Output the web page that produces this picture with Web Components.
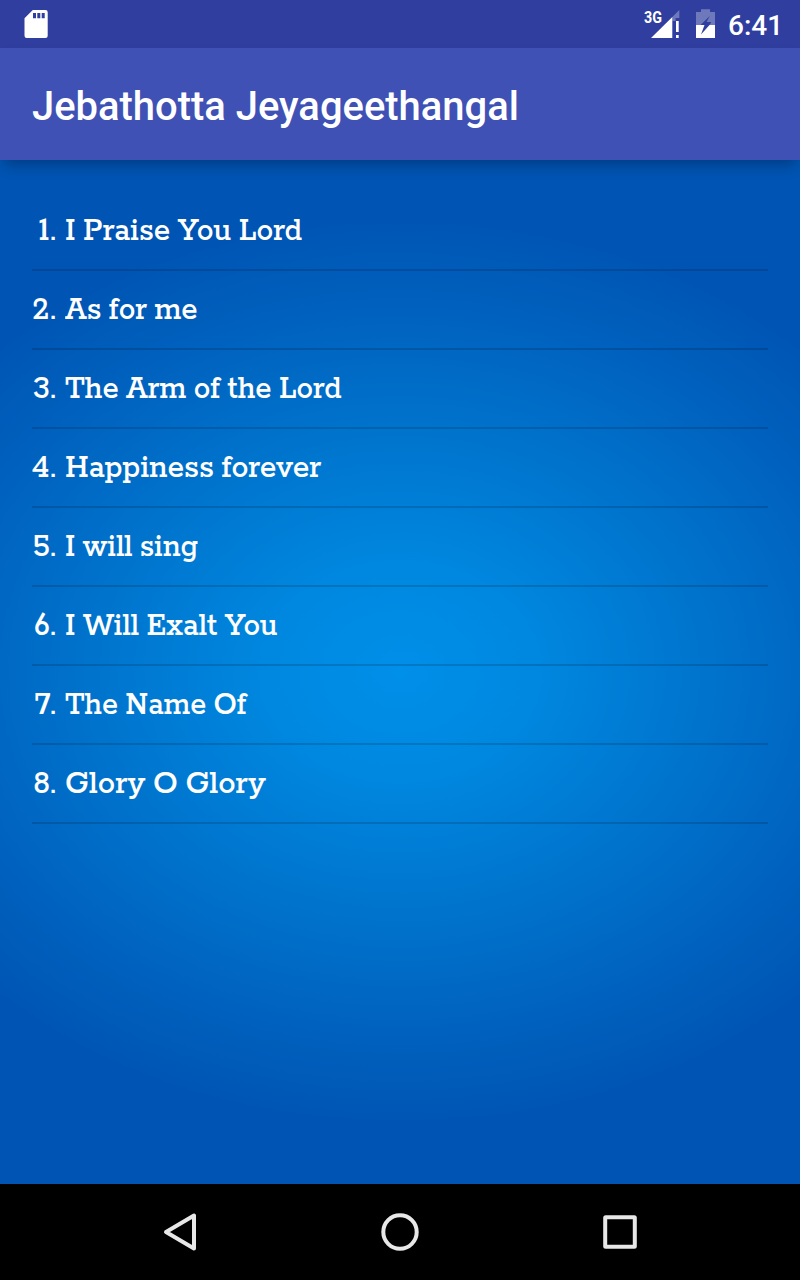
<!DOCTYPE html>
<html lang="en">
<head>
<meta charset="utf-8">
<title>Jebathotta Jeyageethangal</title>
<style>
html,body{margin:0;height:100%;overflow:hidden}
body{font-family:Roboto,"Liberation Sans",sans-serif;color:#fff}
</style>
</head>
<body>
<app-screen>
  <status-bar slot="status" time="6:41"></status-bar>
  <app-toolbar slot="toolbar">Jebathotta Jeyageethangal</app-toolbar>
  <song-list>
    <song-row number="1." extent="237">I Praise You Lord</song-row>
    <song-row number="2." extent="133">As for me</song-row>
    <song-row number="3." extent="277">The Arm of the Lord</song-row>
    <song-row number="4." extent="256">Happiness forever</song-row>
    <song-row number="5." extent="133">I will sing</song-row>
    <song-row number="6." extent="213">I Will Exalt You</song-row>
    <song-row number="7." extent="182">The Name Of</song-row>
    <song-row number="8." extent="201">Glory O Glory</song-row>
  </song-list>
  <nav-bar slot="nav"></nav-bar>
</app-screen>
<script>
function define(name, html, setup) {
  const template = document.createElement('template');
  template.innerHTML = html;
  customElements.define(name, class extends HTMLElement {
    connectedCallback() {
      if (this.shadowRoot) return;
      this.attachShadow({mode: 'open'}).append(template.content.cloneNode(true));
      if (setup) setup(this, this.shadowRoot);
    }
  });
}

define('app-screen', `<style>
:host{display:flex;flex-direction:column;width:800px;height:1280px}
main{flex:1;min-height:0;background:radial-gradient(ellipse 585px 460px at 400px 512px,#008fe9 0%,#0088e0 22%,#0074cd 52%,#005fbc 82%,#0054b3 100%)}
</style>
<slot name="status"></slot><slot name="toolbar"></slot><main><slot></slot></main><slot name="nav"></slot>`);

define('status-bar', `<style>
:host{display:flex;align-items:center;height:48px;box-sizing:border-box;padding:0 18px 0 24px;background:#303f9f}
svg{display:block;flex:none}
.space{flex:1}
.signal{margin-right:15px}
.battery{margin-right:13px}
time{width:54px;font-size:28px;font-weight:500;padding-top:4px;height:44px;line-height:44px;white-space:nowrap}
</style>
<svg width="24" height="48" viewBox="0 0 24 48"><path fill="#fff" fill-rule="evenodd" d="M8.8 10H21.5Q23.7 10 23.7 12.2V35.8Q23.7 38 21.5 38H2.7Q.5 38 .5 35.8V18.3ZM9 13V18.3H12V13ZM13.3 13V18.3H16.3V13ZM17.7 13V18.3H20.7V13Z"/></svg>
<span class="space"></span>
<svg class="signal" width="37" height="48" viewBox="644 0 37 48"><path fill="#fff" fill-opacity=".3" d="M679.3 10V18H675.6V21H672.3V17Z"/><path fill="#fff" d="M672.3 17V38H651ZM676 21H678.7V32H676ZM676 35H678.7V38H676Z"/><text x="644" y="22.7" fill="#fff" font-size="16" font-weight="700" textLength="18" lengthAdjust="spacingAndGlyphs">3G</text></svg>
<svg class="battery" width="19" height="48" viewBox="696 0 19 48"><path fill="#fff" fill-opacity=".3" fill-rule="evenodd" d="M701 9.3H710V12H715V25H709.5L711.3 22H706.5L709.8 16L700.5 25H696V12H701Z"/><path fill="#fff" fill-rule="evenodd" d="M696 25H704.5L701 34.5L709.5 25H715V38H696Z"/></svg>
<time></time>`, (host, root) => {
  root.querySelector('time').textContent = host.getAttribute('time');
});

define('app-toolbar', `<style>
:host{display:flex;align-items:center;height:112px;box-sizing:border-box;padding:6px 32px 0;background:#3f51b5;position:relative;z-index:1;box-shadow:0 8px 14px -4px rgba(0,0,0,.3)}
h1{margin:0;font-size:39.95px;line-height:48px;font-weight:500;white-space:nowrap}
</style><h1><slot></slot></h1>`);

define('song-list', `<style>
:host{display:flex;flex-direction:column;padding:32px 32px 0}
</style><slot></slot>`);

/* The title is set in a slab face and fitted to its own extent in pixels. */
define('song-row', `<style>
:host{display:flex;align-items:center;height:79px;box-sizing:border-box;border-bottom:2px solid rgba(0,0,0,.15);font:500 29px/40px Rockwell,Rokkitt,"DejaVu Serif",serif;font-size-adjust:cap-height .73}
.number{flex:none;display:flex;justify-content:flex-end;width:25px;margin-right:7.5px;letter-spacing:1.3px;transform:scaleX(.95);transform-origin:100% 50%}
.title{display:inline-block;white-space:nowrap;word-spacing:-2.5px;transform-origin:0 50%}
</style><span class="number"></span><span class="title"><slot></slot></span>`, (host, root) => {
  root.querySelector('.number').textContent = host.getAttribute('number');
  const label = root.querySelector('.title');
  const fit = () => {
    const width = label.offsetWidth;
    if (width) label.style.transform = 'scaleX(' + host.getAttribute('extent') / width + ')';
  };
  fit();
  requestAnimationFrame(fit);
});

define('nav-bar', `<style>
:host{display:flex;justify-content:center;align-items:center;gap:172px;height:96px;background:#000}
svg{display:block;fill:none;stroke:#e8e8e8;stroke-width:4;stroke-linejoin:round}
</style>
<svg width="48" height="48" viewBox="156 1208 48 48"><path d="M194 1215.6V1248.4L166 1232Z"/></svg>
<svg width="48" height="48" viewBox="376 1208 48 48"><circle cx="400" cy="1232" r="16.7"/></svg>
<svg width="48" height="48" viewBox="596 1208 48 48"><rect x="605.2" y="1217.2" width="29.6" height="29.6" rx=".5"/></svg>`);
</script>
</body>
</html>
